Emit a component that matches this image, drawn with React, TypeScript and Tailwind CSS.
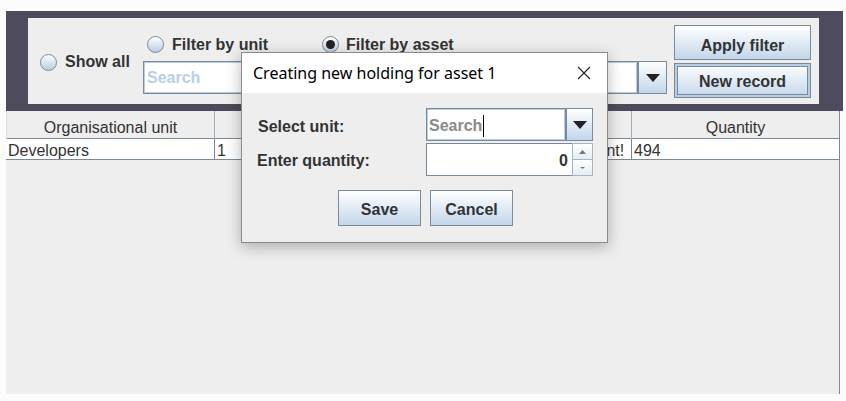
import React from 'react';

const sans = { fontFamily: '"Liberation Sans", Arial, sans-serif' };

const Radio: React.FC<{ checked?: boolean }> = ({ checked }) => (
  <span className="relative inline-flex h-[17px] w-[17px] shrink-0 items-center justify-center rounded-full border border-[#7a8a99] bg-gradient-to-b from-white to-[#b9cde0]">
    {checked && <span className="h-[9px] w-[9px] rounded-full bg-[#222]" />}
  </span>
);

const ArrowButton: React.FC<{ className?: string }> = ({ className = '' }) => (
  <div
    className={`flex items-center justify-center border border-[#7a8a99] bg-gradient-to-b from-white to-[#c3d6ea] ${className}`}
  >
    <svg width="14" height="8" viewBox="0 0 14 8">
      <path d="M0 0 L14 0 L7 8 Z" fill="#222" />
    </svg>
  </div>
);

const MetalButton: React.FC<{ label: string; focused?: boolean; className?: string }> = ({
  label,
  focused,
  className = '',
}) => (
  <div
    className={`flex items-center justify-center border border-[#7a8a99] bg-gradient-to-b from-white to-[#c3d6ea] text-[16px] font-bold text-[#333] ${className}`}
    style={sans}
  >
    {focused ? (
      <div className="flex h-full w-full items-center justify-center border-2 border-[#b7cde3]">
        <div className="flex h-full w-full items-center justify-center border border-[#7a8a99] pt-[2px]">{label}</div>
      </div>
    ) : (
      label
    )}
  </div>
);

const columns = ['Organisational unit', 'Asset', 'Description', 'Quantity'];
const rows = [['Developers', '1', 'A very important equipment!', '494']];

const App: React.FC = () => {
  return (
    <div className="relative h-[401px] w-[846px] overflow-hidden bg-[#fcfcfc] pl-[6px] pt-[11px]" style={sans}>
      <div className="flex h-[383px] w-[837px] flex-col">
        {/* filter band */}
        <div className="h-[100px] bg-[#4d4b5c] pl-[22px] pt-[7px]">
          <div className="flex h-[86px] w-[791px] bg-[#eeeeee] pl-[12px] text-[16px] font-bold text-[#333]">
            <div className="flex w-[103px] items-center gap-[8px] pt-[2px]">
              <Radio />
              <span>Show all</span>
            </div>
            <div className="flex w-[524px] flex-col pt-[17px]">
              <div className="flex h-[19px] items-center pl-[4px]">
                <div className="flex w-[175px] items-center gap-[8px]">
                  <Radio />
                  <span>Filter by unit</span>
                </div>
                <div className="flex items-center gap-[7px]">
                  <Radio checked />
                  <span>Filter by asset</span>
                </div>
              </div>
              <div className="mt-[7px] flex h-[33px]">
                <div className="flex flex-1 items-center border border-[#7a8a99] bg-white">
                  <div className="flex h-full w-full items-center border border-[#b7cde3] px-[2px] text-[16px] text-[#b8cfe6]">
                    Search
                  </div>
                </div>
                <ArrowButton className="w-[29px]" />
              </div>
            </div>
            <div className="ml-[7px] flex w-[137px] flex-col gap-[3px] pt-[7px]">
              <MetalButton label="Apply filter" className="h-[35px] pt-[6px]" />
              <MetalButton label="New record" focused className="h-[35px]" />
            </div>
          </div>
        </div>

        {/* table */}
        <div className="flex w-[834px] flex-1 flex-col border-r border-[#7a8a99] bg-[#eeeeee] text-[16px] text-[#333]">
          <div className="grid h-[28px] grid-cols-[208px_208px_209px_208px] border-b border-[#7a8a99]">
            {columns.map((c, i) => (
              <div
                key={c}
                className={`flex items-center justify-center border-[#aaaaaa] pt-[5px] ${i > 0 ? 'border-l' : 'border-l border-l-[#dddddd]'}`}
              >
                {c}
              </div>
            ))}
          </div>
          {rows.map((r, ri) => (
            <div key={ri} className="grid h-[21px] grid-cols-[208px_208px_209px_208px] border-b border-[#7a8a99] bg-white">
              {r.map((v, i) => (
                <div
                  key={i}
                  className={`flex items-center overflow-hidden whitespace-nowrap pl-[2px] pt-[3px] ${i > 0 ? 'border-l border-[#7a8a99]' : ''}`}
                >
                  {v}
                </div>
              ))}
            </div>
          ))}
        </div>
      </div>

      {/* modal dialog */}
      <div className="absolute left-[241px] top-[52px] flex h-[191px] w-[367px] flex-col border border-[#8a8a8a] bg-[#eeeeee] shadow-[0_4px_14px_rgba(0,0,0,0.28)]">
        <div
          className="flex h-[40px] items-center justify-between bg-white pl-[11px] pr-[16px] text-[16px] text-black"
          style={{ fontFamily: '"Noto Sans", "Open Sans", sans-serif' }}
        >
          <span>Creating new holding for asset 1</span>
          <svg width="14" height="14" viewBox="0 0 14 14">
            <path d="M1 1 L13 13 M13 1 L1 13" stroke="#222" strokeWidth="1.1" />
          </svg>
        </div>
        <div className="flex flex-col pl-[15px] pt-[15px] text-[16px] font-bold text-[#333]">
          <div className="flex h-[33px] items-center">
            <span className="w-[169px] pl-[1px] pt-[4px]">Select unit:</span>
            <div className="flex h-full w-[167px]">
              <div className="flex flex-1 border border-[#7a8a99] bg-white">
                <div className="flex h-full w-full items-center border border-[#b7cde3] pl-[1px] pt-[2px] text-[#8a8a8a]">
                  Search
                  <span className="ml-[1px] h-[22px] w-px bg-black" />
                </div>
              </div>
              <ArrowButton className="w-[27px]" />
            </div>
          </div>
          <div className="mt-[2px] flex h-[33px] items-center">
            <span className="w-[169px] pt-[2px]">Enter quantity:</span>
            <div className="flex h-full w-[167px]">
              <div className="flex flex-1 items-center justify-end border-b border-l border-t border-[#7a8a99] bg-white pr-[4px] pt-[2px]">
                0
              </div>
              <div className="flex w-[21px] flex-col">
                <div className="flex flex-1 items-center justify-center border border-[#a8b6c4] bg-gradient-to-b from-white to-[#e6edf4]">
                  <svg width="7" height="4" viewBox="0 0 7 4">
                    <path d="M0 4 L7 4 L3.5 0 Z" fill="#777" />
                  </svg>
                </div>
                <div className="flex flex-1 items-center justify-center border border-t-0 border-[#a8b6c4] bg-gradient-to-b from-white to-[#e6edf4]">
                  <svg width="5" height="2" viewBox="0 0 5 2">
                    <path d="M0 0 L5 0 L2.5 2 Z" fill="#777" />
                  </svg>
                </div>
              </div>
            </div>
          </div>
          <div className="mt-[14px] flex gap-[9px] pl-[81px]">
            <MetalButton label="Save" className="h-[36px] w-[83px] pt-[4px]" />
            <MetalButton label="Cancel" className="h-[36px] w-[83px] pt-[4px]" />
          </div>
        </div>
      </div>
    </div>
  );
};

export default App;
